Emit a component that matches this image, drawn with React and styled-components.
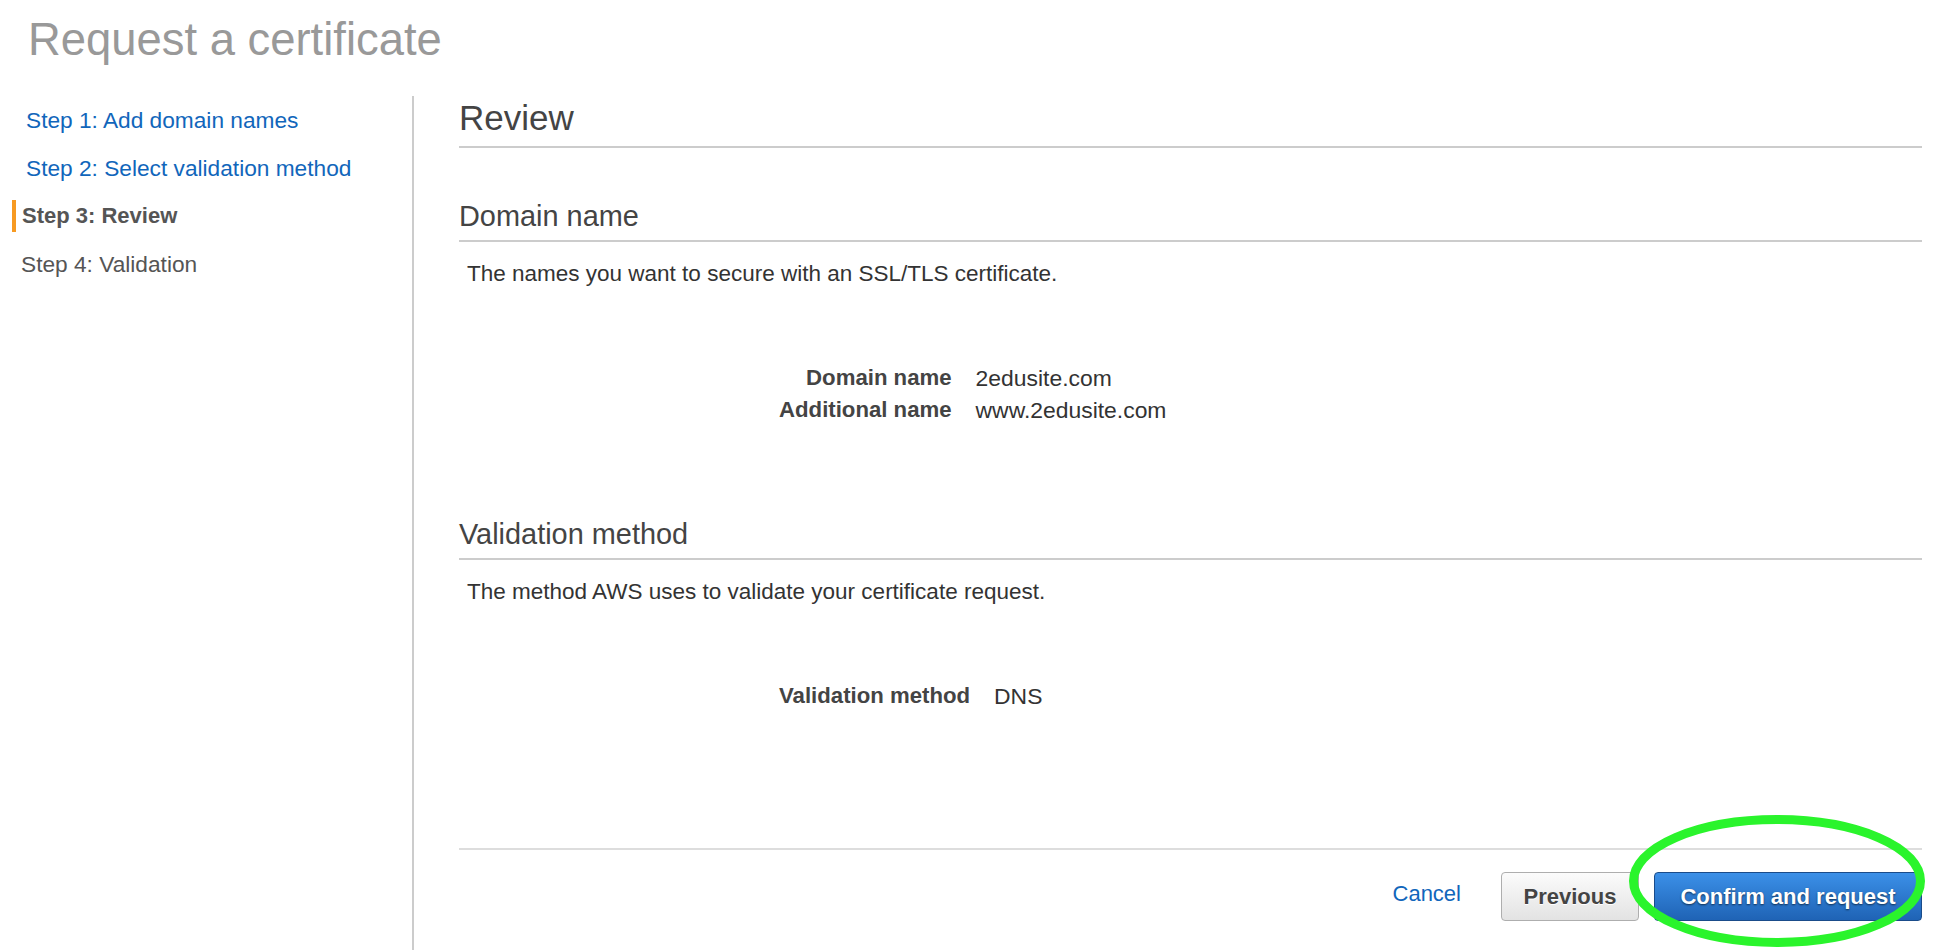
import React from 'react'
import styled, { createGlobalStyle, css } from 'styled-components'

const GlobalStyle = createGlobalStyle`
  html, body {
    margin: 0;
    padding: 0;
    background: #fff;
  }
  body {
    font-family: "Liberation Sans", Arial, Helvetica, sans-serif;
    overflow: hidden;
  }
  * { box-sizing: border-box; }
`

const steps = [
  { label: 'Step 1: Add domain names', kind: 'link' },
  { label: 'Step 2: Select validation method', kind: 'link' },
  { label: 'Step 3: Review', kind: 'active' },
  { label: 'Step 4: Validation', kind: 'todo' },
]

const App = () => {
  return (
    <Page>
      <GlobalStyle />
      <Title>Request a certificate</Title>
      <Body>
        <Sidebar>
          <StepList>
            {steps.map((s) => (
              <StepItem key={s.label} $kind={s.kind}>
                {s.label}
              </StepItem>
            ))}
          </StepList>
        </Sidebar>
        <Main>
          <PageHeading>Review</PageHeading>

          <SectionHeading $gap={51}>Domain name</SectionHeading>
          <Description>The names you want to secure with an SSL/TLS certificate.</Description>
          <Details>
            <dt>Domain name</dt>
            <dd>2edusite.com</dd>
            <dt>Additional name</dt>
            <dd>www.2edusite.com</dd>
          </Details>

          <SectionHeading $gap={91}>Validation method</SectionHeading>
          <Description>The method AWS uses to validate your certificate request.</Description>
          <Details>
            <dt>Validation method</dt>
            <dd>DNS</dd>
          </Details>

          <Footer>
            <CancelLink>Cancel</CancelLink>
            <Button $width={138}>Previous</Button>
            <Highlight>
              <Button $primary $width={268}>Confirm and request</Button>
              <Ring width="320" height="140" viewBox="0 0 320 140">
                <ellipse cx="157" cy="71" rx="143.5" ry="61.5" fill="none" stroke="#2af42c" strokeWidth="9" />
              </Ring>
            </Highlight>
          </Footer>
        </Main>
      </Body>
    </Page>
  )
}

const Page = styled.div`
  height: 100vh;
  display: flex;
  flex-direction: column;
`

const Title = styled.h1`
  margin: 0;
  padding: 14px 0 30px 28px;
  font-size: 45.4px;
  line-height: 52px;
  font-weight: normal;
  color: #999;
`

const Body = styled.div`
  flex: 1;
  display: flex;
  min-height: 0;
`

const Sidebar = styled.nav`
  width: 414px;
  flex: none;
  border-right: 2px solid #ccc;
`

const StepList = styled.ul`
  margin: 0;
  padding: 0;
  list-style: none;
`

const StepItem = styled.li`
  display: flex;
  align-items: center;
  height: 48px;
  font-size: ${(p) => (p.$kind === 'active' ? 22 : 22.7)}px;
  line-height: 28px;
  padding-left: ${(p) => (p.$kind === 'link' ? 26 : p.$kind === 'active' ? 12 : 21)}px;
  color: ${(p) => (p.$kind === 'link' ? '#1166bb' : '#555')};
  font-weight: ${(p) => (p.$kind === 'active' ? 'bold' : 'normal')};
  cursor: ${(p) => (p.$kind === 'link' ? 'pointer' : 'default')};

  ${(p) =>
    p.$kind === 'active' &&
    css`
      &::before {
        content: '';
        width: 4px;
        height: 32px;
        margin-right: 6px;
        background: #f79a22;
      }
    `}
`

const Main = styled.main`
  flex: 1;
  display: flex;
  flex-direction: column;
  padding: 2px 20px 29px 45px;
`

const PageHeading = styled.h2`
  margin: 0;
  padding-bottom: 8px;
  border-bottom: 2px solid #ccc;
  font-size: 35px;
  line-height: 40px;
  font-weight: normal;
  color: #444;
`

const SectionHeading = styled.h3`
  margin: ${(p) => p.$gap}px 0 0;
  padding-bottom: 7px;
  border-bottom: 2px solid #ccc;
  font-size: 28.9px;
  line-height: 34px;
  font-weight: normal;
  color: #444;
`

const Description = styled.p`
  margin: 18px 0 0;
  padding-left: 8px;
  font-size: 22.5px;
  line-height: 28px;
  color: #333;
`

const Details = styled.dl`
  display: grid;
  grid-template-columns: auto auto;
  justify-content: start;
  column-gap: 24px;
  margin: 74px 0 0 320px;
  font-size: 22.2px;
  line-height: 32px;

  dt {
    margin: 0;
    font-weight: bold;
    text-align: right;
    color: #444;
  }

  dd {
    margin: 0;
    font-size: 22.9px;
    color: #333;
  }
`

const Footer = styled.div`
  margin-top: auto;
  padding-top: 22px;
  border-top: 2px solid #ddd;
  display: flex;
  justify-content: flex-end;
  align-items: center;
`

const CancelLink = styled.a`
  margin: 0 40px 5px 0;
  font-size: 22px;
  line-height: 28px;
  color: #1166bb;
  cursor: pointer;
`

const Button = styled.button`
  width: ${(p) => p.$width}px;
  height: 49px;
  padding: 0;
  border-radius: 4px;
  font-family: "Liberation Sans", Arial, Helvetica, sans-serif;
  font-size: 22px;
  font-weight: bold;
  line-height: 47px;
  cursor: pointer;

  ${(p) =>
    p.$primary
      ? css`
          color: #fff;
          background: linear-gradient(#3b90e8, #1f63b5);
          border: 1px solid #1a4c8a;
          text-shadow: 0 1px 2px rgba(0, 0, 0, 0.6);
        `
      : css`
          color: #444;
          background: linear-gradient(#fbfbfb, #e3e3e3);
          border: 1px solid #aeaeae;
          text-shadow: 0 1px 0 #fff;
        `}
`

const Highlight = styled.div`
  position: relative;
  margin-left: 15px;
`

const Ring = styled.svg`
  position: absolute;
  left: -34px;
  top: -62px;
  pointer-events: none;
`

export default App
